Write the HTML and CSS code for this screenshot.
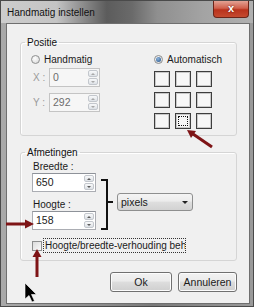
FILE: index.html
```html
<!DOCTYPE html>
<html lang="nl">

<head>
  <meta charset="UTF-8" />
  <title>Handmatig instellen</title>
  <link rel="stylesheet" href="styles.css">
</head>

<body>
  <div class="screen">
    <div class="window">
      <div class="titlebar">
        <span class="title">Handmatig instellen</span>
        <span class="close">x</span>
      </div>

      <div class="content">
        <fieldset class="group">
          <legend>Positie</legend>
          <div class="positie">
            <div class="col-manual">
              <div class="radio-row"><span class="radio"></span>Handmatig</div>
              <div class="coord-row first">
                <span class="coord-label">X :</span>
                <div class="spin small disabled">
                  <span class="spin-value">0</span>
                  <span class="spin-btns"><span class="spin-up"></span><span class="spin-down"></span></span>
                </div>
              </div>
              <div class="coord-row">
                <span class="coord-label">Y :</span>
                <div class="spin small disabled">
                  <span class="spin-value">292</span>
                  <span class="spin-btns"><span class="spin-up"></span><span class="spin-down"></span></span>
                </div>
              </div>
            </div>
            <div class="col-auto">
              <div class="radio-row"><span class="radio checked"></span>Automatisch</div>
              <div class="anchor-grid">
                <span class="anchor"></span>
                <span class="anchor"></span>
                <span class="anchor"></span>
                <span class="anchor"></span>
                <span class="anchor"></span>
                <span class="anchor"></span>
                <span class="anchor"></span>
                <span class="anchor selected"></span>
                <span class="anchor"></span>
              </div>
            </div>
          </div>
        </fieldset>

        <fieldset class="group afmetingen">
          <legend>Afmetingen</legend>
          <div class="size-body">
            <div class="size-row">
              <div class="size-fields">
                <span class="field-label">Breedte :</span>
                <div class="spin">
                  <span class="spin-value">650</span>
                  <span class="spin-btns"><span class="spin-up"></span><span class="spin-down"></span></span>
                </div>
                <span class="field-label second">Hoogte :</span>
                <div class="spin">
                  <span class="spin-value">158</span>
                  <span class="spin-btns"><span class="spin-up"></span><span class="spin-down"></span></span>
                </div>
              </div>
              <svg class="bracket" width="13" height="53" viewBox="0 0 13 53">
                <path d="M1 2 H7 V51 H1 M7 24 H13" fill="none" stroke="#111" stroke-width="2" />
              </svg>
              <div class="select">
                <span>pixels</span>
                <span class="select-arrow"></span>
              </div>
            </div>
            <div class="check-row">
              <span class="checkbox"></span>
              <span class="check-label">Hoogte/breedte-verhouding behouden</span>
            </div>
          </div>
        </fieldset>

        <div class="buttons">
          <button class="btn ok">Ok</button>
          <button class="btn cancel">Annuleren</button>
        </div>
      </div>
    </div>

    <!-- annotation arrows and mouse cursor drawn over the dialog -->
    <svg class="overlay" width="254" height="307" viewBox="0 0 254 307">
      <g fill="#7e1416" stroke="#7e1416">
        <line x1="212" y1="147" x2="193" y2="134" stroke-width="3" />
        <polygon points="187,130 196,131 191,138" stroke="none" />
        <line x1="6" y1="224" x2="27" y2="224" stroke-width="3" />
        <polygon points="34,224 25,219.5 25,228.5" stroke="none" />
        <line x1="37" y1="277" x2="37" y2="255" stroke-width="3" />
        <polygon points="37,249 32.5,257 41.5,257" stroke="none" />
      </g>
      <path d="M25 283 V299 L29 295.5 L32 302 L34.5 301 L31.5 294.5 L36.5 294.5 Z" fill="#000" stroke="#fff" stroke-width="0.6" />
    </svg>
  </div>
</body>

</html>
```

FILE: styles.css
```css
:root {
  --face: #f0f0f0;
  --group-border: #d5d5d5;
  --input-border: #abadb3;
  --text: #1a1a1a;
  --muted: #9a9a9a;
}

* {
  box-sizing: border-box;
}

body {
  margin: 0;
  font-family: 'Liberation Sans', Arial, sans-serif;
  font-size: 10px;
  color: var(--text);
  background: #fff;
}

.screen {
  position: relative;
  width: 254px;
  height: 307px;
}

.window {
  width: 254px;
  height: 307px;
  display: flex;
  flex-direction: column;
  border: 1px solid #4a4a4a;
  background: linear-gradient(90deg, #a9a9a9, #8c8c8c 40%, #7a7a7a 60%, #9a9a9a);
}

.titlebar {
  height: 22px;
  display: flex;
  align-items: flex-start;
  background: linear-gradient(90deg, #cdcdcd 0%, #c4c4c4 22%, #8a8a8a 33%, #5c5c5c 42%, #6a6a6a 52%, #8f8f8f 62%, #a3a3a3 80%, #b0b0b0 100%);
}

.title {
  padding: 5px 0 0 6px;
  line-height: 13px;
  color: #111;
}

.close {
  margin-left: auto;
  margin-right: 4px;
  width: 36px;
  height: 17px;
  border: 1px solid #6b2418;
  border-top: none;
  border-radius: 0 0 4px 4px;
  background: linear-gradient(#e3a294 0%, #d0604c 45%, #b9321c 55%, #c44a2f 100%);
  color: #fff;
  font-weight: bold;
  font-size: 11px;
  line-height: 14px;
  text-align: center;
  text-shadow: 0 0 2px #5a1208;
}

.content {
  flex: 1;
  margin: 0 3px 2px 5px;
  border: 1px solid #6f6f6f;
  background: var(--face);
  padding: 11px 12px 0 13px;
}

.group {
  margin: 0;
  padding: 0;
  width: 217px;
  border: 1px solid var(--group-border);
  border-radius: 3px;
  box-shadow: inset 1px 1px 0 #fff;
}

.group legend {
  margin-left: 4px;
  padding: 0 2px;
  line-height: 15px;
  color: #111;
}

.afmetingen {
  margin-top: 9px;
}

/* Positie */

.positie {
  display: flex;
  padding: 2px 0 6px 10px;
}

.col-manual {
  width: 123px;
}

.radio-row {
  display: flex;
  align-items: center;
  height: 14px;
}

.radio {
  width: 9px;
  height: 9px;
  margin-right: 4px;
  border-radius: 50%;
  border: 1px solid #8e8f8f;
  background: radial-gradient(circle at 40% 35%, #fdfdfd, #d6d6d6);
  display: flex;
  align-items: center;
  justify-content: center;
}

.radio.checked::after {
  content: '';
  width: 5px;
  height: 5px;
  border-radius: 50%;
  background: radial-gradient(circle at 40% 35%, #8fb4dc, #1d4f86);
}

.coord-row {
  display: flex;
  align-items: center;
  margin-top: 6px;
  padding-left: 2px;
}

.coord-row.first {
  margin-top: 2px;
}

.coord-label {
  width: 16px;
  color: var(--muted);
}

.col-auto .anchor-grid {
  margin-top: 5px;
  display: grid;
  grid-template-columns: repeat(3, 16px);
  grid-auto-rows: 16px;
  gap: 5px;
}

.anchor {
  border: 1px solid #3e3e3e;
  background: #f7f7f7;
  box-shadow: inset 0 0 0 1px #c9c9c9;
}

.anchor.selected {
  outline: 1px dotted #111;
  outline-offset: -4px;
}

/* Spin boxes */

.spin {
  display: flex;
  width: 64px;
  height: 19px;
  border: 1px solid var(--input-border);
  border-top-color: #8e9299;
  background: #fff;
}

.spin.small {
  width: 51px;
}

.spin-value {
  flex: 1;
  padding-left: 3px;
  line-height: 17px;
  font-size: 10.5px;
}

.spin.disabled {
  border-color: #c4c4c4;
  background: #f6f6f6;
}

.spin.disabled .spin-value {
  color: #6d6d6d;
}

.spin-btns {
  display: flex;
  flex-direction: column;
  width: 11px;
  padding: 1px 1px 1px 0;
  gap: 1px;
}

.spin-up,
.spin-down {
  flex: 1;
  display: flex;
  align-items: center;
  justify-content: center;
  border: 1px solid #c3c7cd;
  border-radius: 2px;
  background: linear-gradient(#f8f9fa, #dde1e6);
}

.spin-up::after,
.spin-down::after {
  content: '';
  border-left: 2px solid transparent;
  border-right: 2px solid transparent;
}

.spin-up::after {
  border-bottom: 2px solid #5a5a5a;
}

.spin-down::after {
  border-top: 2px solid #5a5a5a;
}

.spin.disabled .spin-up::after {
  border-bottom-color: #a8a8a8;
}

.spin.disabled .spin-down::after {
  border-top-color: #a8a8a8;
}

/* Afmetingen */

.size-body {
  padding: 0 0 7px 11px;
}

.size-row {
  display: flex;
  align-items: flex-start;
}

.size-fields {
  display: flex;
  flex-direction: column;
}

.field-label {
  line-height: 13px;
  padding-left: 1px;
}

.field-label.second {
  margin-top: 6px;
}

.bracket {
  margin: 18px 0 0 4px;
}

.select {
  margin: 33px 0 0 4px;
  width: 76px;
  height: 18px;
  display: flex;
  align-items: center;
  padding-left: 3px;
  border: 1px solid #8e8f8f;
  border-radius: 3px;
  background: linear-gradient(#f4f4f4 0%, #ececec 45%, #dedede 50%, #d2d2d2 100%);
  font-size: 10.5px;
}

.select-arrow {
  margin-left: auto;
  margin-right: 4px;
  border-left: 3px solid transparent;
  border-right: 3px solid transparent;
  border-top: 3px solid #222;
}

.check-row {
  display: flex;
  align-items: center;
  height: 15px;
  margin-top: 7px;
}

.checkbox {
  width: 10px;
  height: 10px;
  margin-right: 1px;
  border: 1px solid #8e8f8f;
  background: linear-gradient(135deg, #dcdcdc, #fafafa);
}

.check-label {
  width: 143px;
  height: 15px;
  padding: 0 1px;
  line-height: 13px;
  border: 1px dotted #333;
  white-space: nowrap;
  overflow: hidden;
}

/* Buttons */

.buttons {
  display: flex;
  justify-content: flex-end;
  gap: 6px;
  margin-top: 11px;
}

.btn {
  height: 20px;
  padding: 0;
  font-family: inherit;
  font-size: 10.5px;
  color: var(--text);
  border: 1px solid #707070;
  border-radius: 3px;
  background: linear-gradient(#f2f2f2 0%, #ebebeb 45%, #dddddd 50%, #cfcfcf 100%);
  box-shadow: inset 0 0 0 1px #fcfcfc;
}

.btn.ok {
  width: 62px;
}

.btn.cancel {
  width: 59px;
}

.overlay {
  position: absolute;
  top: 0;
  left: 0;
  pointer-events: none;
}
```
